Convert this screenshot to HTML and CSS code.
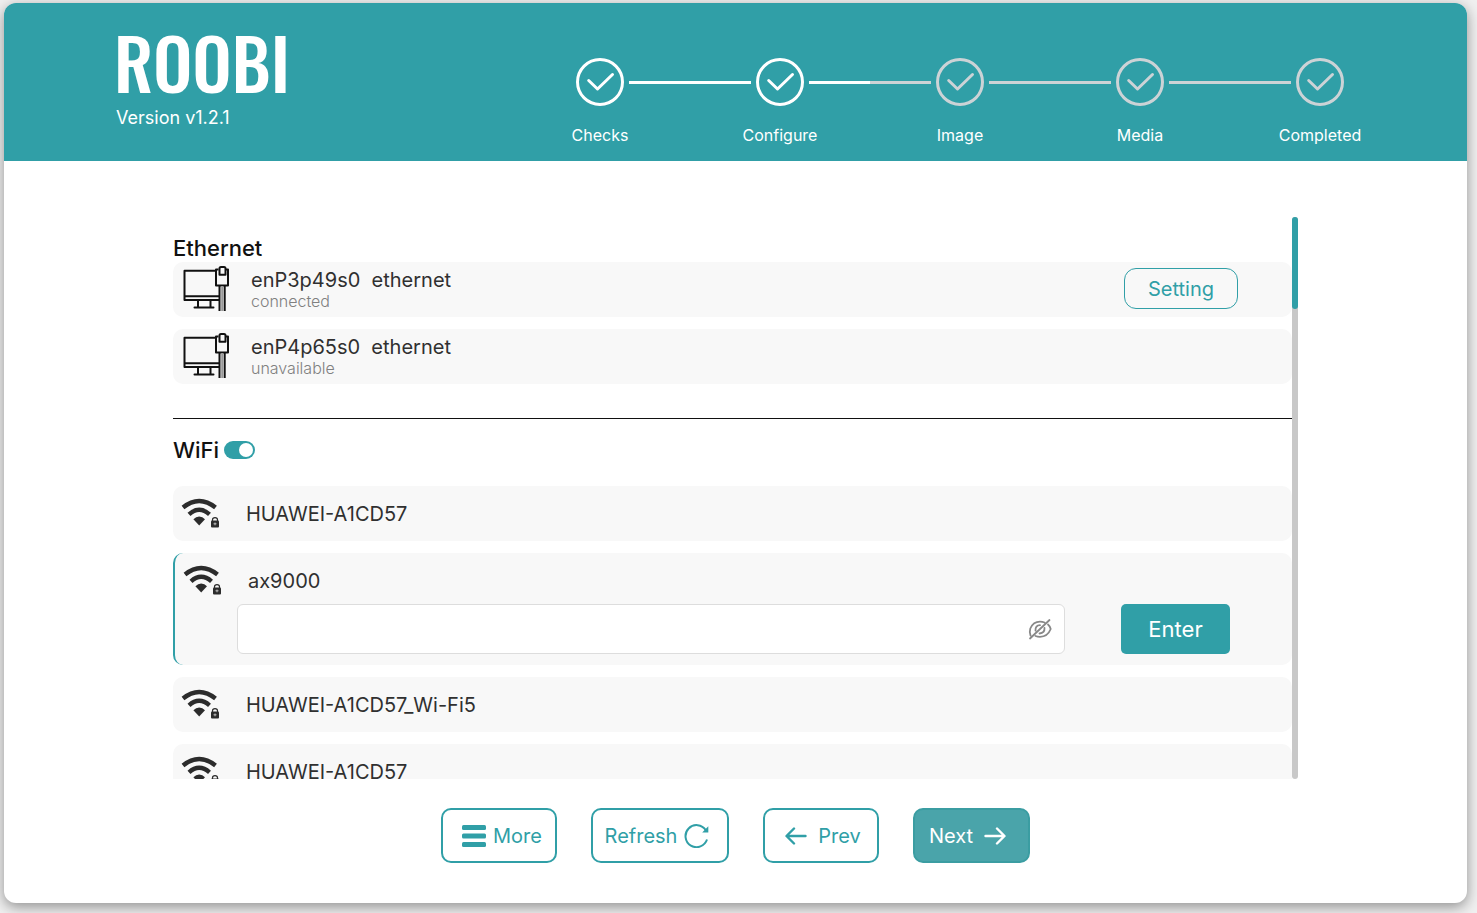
FILE: index.html
```html
<!DOCTYPE html>
<html lang="en">
<head>
<meta charset="utf-8">
<meta name="viewport" content="width=device-width, initial-scale=1">
<title>ROOBI - Configure</title>
<link rel="stylesheet" href="styles.css">
</head>
<body>
<svg class="sprite" aria-hidden="true">
  <symbol id="check" viewBox="0 0 48 48">
    <g fill="none" stroke="currentColor" stroke-width="3">
      <circle cx="24" cy="24" r="22.5"/>
      <path d="M12.7 22.5 21.500 31 36.500 16.500" stroke-linecap="round" stroke-linejoin="round"/>
    </g>
  </symbol>
  <symbol id="wired" viewBox="0 0 46 47">
    <g fill="none" stroke="currentColor" stroke-width="2" stroke-linejoin="round">
      <path d="M32.5 5.8H1.5V35H36M2 31.2H36"/>
      <path d="M15 35v7M27.500 35v7M11.500 42.500H30.500" stroke-linecap="round"/>
      <path d="M35.500 4.500H33V20.500H45V4.500H43"/>
      <path d="M36.500 9.800V3.500Q36.500 2 38 2H41Q42.500 2 42.500 3.500V9.800Z"/>
      <path d="M36.500 20.500V46M41.700 20.500V46"/>
      <path d="M39.200 21V46" stroke="#999"/>
    </g>
  </symbol>
  <symbol id="wifi-lock" viewBox="0 1.500 40 32">
    <g fill="none" stroke="currentColor" stroke-width="4.400">
      <path d="M2 11Q10 4.500 18.200 4.500T34.500 11"/>
      <path d="M8 17.800Q13 13.300 18.200 13.300T28.500 17.800"/>
    </g>
    <path d="M18.200 20Q21.500 20 24 22.800L18.200 29 12.400 22.800Q15 20 18.200 20Z" fill="currentColor"/>
    <rect x="30" y="24" width="8" height="7" rx="1" fill="currentColor"/>
    <path d="M31.500 24.500V23.300Q31.500 21.200 34 21.200T36.500 23.300V24.500" fill="none" stroke="currentColor" stroke-width="1.200"/>
    <path d="M32.500 27.300H35.500M34 26V28.800" stroke="#bbb" stroke-width="1"/>
  </symbol>
</svg>

<div class="window">
  <header class="header">
    <div class="brand">
      <h1 class="logo">ROOBI</h1>
      <p class="version">Version v1.2.1</p>
    </div>
    <ol class="steps">
      <li class="step"><div class="track"><span class="line line-none"></span><svg class="step-icon done"><use href="#check"/></svg><span class="line line-done"></span></div><span class="step-label">Checks</span></li>
      <li class="step" aria-current="step"><div class="track"><span class="line line-done"></span><svg class="step-icon done"><use href="#check"/></svg><span class="line line-done"></span></div><span class="step-label">Configure</span></li>
      <li class="step"><div class="track"><span class="line"></span><svg class="step-icon"><use href="#check"/></svg><span class="line"></span></div><span class="step-label">Image</span></li>
      <li class="step"><div class="track"><span class="line"></span><svg class="step-icon"><use href="#check"/></svg><span class="line"></span></div><span class="step-label">Media</span></li>
      <li class="step"><div class="track"><span class="line"></span><svg class="step-icon"><use href="#check"/></svg><span class="line line-none"></span></div><span class="step-label">Completed</span></li>
    </ol>
  </header>

  <main class="content">
    <div class="networks">
      <section class="group">
        <h2 class="heading">Ethernet</h2>
        <ul class="list">
          <li class="row wired">
            <svg class="wired-icon"><use href="#wired"/></svg>
            <div class="device"><span class="name">enP3p49s0&nbsp; ethernet</span><span class="state">connected</span></div>
            <button class="setting" type="button">Setting</button>
          </li>
          <li class="row wired">
            <svg class="wired-icon"><use href="#wired"/></svg>
            <div class="device"><span class="name">enP4p65s0&nbsp; ethernet</span><span class="state">unavailable</span></div>
          </li>
        </ul>
      </section>
      <hr class="divider">
      <section class="group">
        <div class="wifi-head">
          <h2 class="heading">WiFi</h2>
          <input class="switch" type="checkbox" role="switch" aria-label="WiFi" checked>
        </div>
        <ul class="list">
          <li class="row wifi"><svg class="wifi-icon"><use href="#wifi-lock"/></svg><span class="name">HUAWEI-A1CD57</span></li>
          <li class="selected">
            <div class="wifi selected-head"><svg class="wifi-icon"><use href="#wifi-lock"/></svg><span class="name">ax9000</span></div>
            <form class="join">
              <div class="field">
                <input class="password" type="password" aria-label="Password for ax9000">
                <button class="reveal" type="button" aria-label="Show password">
                  <svg class="eye" viewBox="0 0 24 22" fill="none" stroke="currentColor" stroke-width="1.800" stroke-linecap="round"><path d="M2.500 17.500Q1.200 14 2.300 10.500C4.500 5.500 8 3.600 12 3.600Q14.500 3.600 16.500 4.500M20 6.500Q22 8.200 22.700 11C20.500 16.500 16.500 18.800 12 18.800Q9.500 18.800 7.500 18M7.500 12.500Q7.200 7.300 12 7.200M16.500 10Q16.800 15 11.500 15.500M11 12 13 10M2 20.500 21.500 2"/></svg>
                </button>
              </div>
              <button class="enter" type="submit">Enter</button>
            </form>
          </li>
          <li class="row wifi"><svg class="wifi-icon"><use href="#wifi-lock"/></svg><span class="name">HUAWEI-A1CD57_Wi-Fi5</span></li>
          <li class="row wifi"><svg class="wifi-icon"><use href="#wifi-lock"/></svg><span class="name">HUAWEI-A1CD57</span></li>
        </ul>
      </section>
    </div>
    <div class="scrollbar"><div class="thumb"></div></div>
  </main>

  <footer class="actions">
    <button class="action more" type="button"><svg width="24" height="22" viewBox="0 0 24 22" fill="currentColor"><rect width="24" height="5" rx="1.500"/><rect y="8.500" width="24" height="5" rx="1.500"/><rect y="17" width="24" height="5" rx="1.500"/></svg>More</button>
    <button class="action refresh" type="button">Refresh<svg width="25" height="25" viewBox="0 0 25 25" fill="none" stroke="currentColor" stroke-width="2"><path d="M23 16.500A11 11 0 1 1 21.800 7.200"/><path d="M24.300 3.200V9.600H18.200Z" fill="currentColor" stroke="none"/></svg></button>
    <button class="action prev" type="button"><svg width="22" height="18" viewBox="0 0 22 18" fill="none" stroke="currentColor" stroke-width="2.400" stroke-linecap="round" stroke-linejoin="round"><path d="M20.500 9H2M9 1.500 1.500 9 9 16.500"/></svg>Prev</button>
    <button class="action next" type="button">Next<svg width="22" height="18" viewBox="0 0 22 18" fill="none" stroke="currentColor" stroke-width="2.400" stroke-linecap="round" stroke-linejoin="round"><path d="M1.500 9H20M13 1.500 20.500 9 13 16.500"/></svg></button>
  </footer>
</div>
</body>
</html>
```

FILE: styles.css
```css
:root {
  --teal: #309fa7;
  --muted-step: #ccd3d6;
  --row: #f8f8f8;
}

* { box-sizing: border-box; }

body {
  margin: 0;
  padding: 3px 10px 10px 4px;
  background: #f0f0f0;
  font-family: Inter, "Liberation Sans", sans-serif;
  color: #303030;
}

h1, h2, p, ol, ul { margin: 0; padding: 0; }
ol, ul { list-style: none; }
button, input { font-family: inherit; margin: 0; }
button { cursor: pointer; }
svg { flex: none; }
.sprite { display: none; }

.window {
  display: flex;
  flex-direction: column;
  height: calc(100vh - 13px);
  min-height: 500px;
  overflow: hidden;
  background: #fff;
  border-radius: 12px;
  box-shadow: 0 4px 14px rgba(0, 0, 0, 0.4);
}

.header {
  display: flex;
  justify-content: space-between;
  min-height: 158px;
  padding: 24px 57px 0 110px;
  background: var(--teal);
  color: #fff;
}

.logo {
  font: 500 70px/68px Oswald, "Roboto Condensed", "Liberation Sans Narrow", "DejaVu Sans Condensed", sans-serif;
}

.version { margin-top: 8px; padding-left: 2px; font-size: 18px; line-height: 30px; }

.steps { display: flex; padding-top: 31px; }
.step { width: 180px; text-align: center; }
.track { display: flex; align-items: center; gap: 5px; }
.line { flex: 1; height: 3px; background: var(--muted-step); }
.line-done { background: #fff; }
.line-none { background: transparent; }
.step-icon { width: 48px; height: 48px; color: var(--muted-step); }
.step-icon.done { color: #fff; }
.step-label { display: block; margin-top: 19px; font-size: 16px; line-height: 20px; }

.content {
  display: flex;
  flex: 1;
  min-height: 0;
  width: 76.9%;
  margin: 56px auto 0;
}

.networks { flex: 1; min-width: 0; padding-top: 17px; overflow: hidden; }
.heading { font-size: 22px; font-weight: 500; line-height: 28px; color: #111; }
.list { display: flex; flex-direction: column; gap: 12px; }

.row {
  display: flex;
  align-items: center;
  height: 55px;
  background: var(--row);
  border-radius: 10px;
}

.wired { gap: 22px; padding: 0 54px 2px 10px; }
.wired-icon { width: 46px; height: 47px; color: #111; }
.device { display: flex; flex-direction: column; flex: 1; }
.name { font-size: 20px; line-height: 24px; white-space: nowrap; }
.state { font-size: 16px; line-height: 18px; font-weight: 300; color: #808080; }

.setting {
  width: 114px;
  height: 41px;
  border: 1px solid var(--teal);
  border-radius: 12px;
  background: transparent;
  color: var(--teal);
  font-size: 20px;
}

.divider { height: 1px; margin: 34px 0 17px; border: 0; background: #111; }
.wifi-head { display: flex; align-items: center; gap: 5px; margin-bottom: 22px; }

.switch {
  appearance: none;
  display: flex;
  justify-content: flex-end;
  align-items: center;
  width: 31px;
  height: 18px;
  padding: 2px;
  border-radius: 9px;
  background: var(--teal);
}
.switch::before { content: ""; width: 14px; height: 14px; border-radius: 50%; background: #fff; }
.switch:not(:checked) { justify-content: flex-start; background: #bbb; }

.wifi { display: flex; align-items: center; gap: 25px; padding-left: 8px; }
.wifi-icon { width: 40px; height: 32px; color: #2c2c2c; }

.selected {
  padding: 4px 0 11px;
  background: var(--row);
  border-left: 2px solid var(--teal);
  border-radius: 10px;
}
.selected-head { height: 47px; }
.join { display: flex; gap: 56px; padding: 0 62px; }

.field {
  display: flex;
  flex: 1;
  height: 50px;
  background: #fff;
  border: 1px solid #ddd;
  border-radius: 6px;
}
.password { flex: 1; min-width: 0; padding: 0 12px; border: 0; background: transparent; font-size: 20px; outline: none; }
.reveal { display: flex; align-items: center; padding: 0 12px; border: 0; background: none; color: #888; }
.eye { width: 24px; height: 22px; }

.enter {
  width: 109px;
  height: 50px;
  border: 0;
  border-radius: 5px;
  background: var(--teal);
  color: #fff;
  font-size: 22px;
}

.scrollbar { width: 6px; background: #c8c8c8; border-radius: 3px; }
.thumb { height: 92px; background: var(--teal); border-radius: 3px; }

.actions { display: flex; justify-content: center; gap: 34px; padding: 29px 0 40px; }

.action {
  display: flex;
  align-items: center;
  justify-content: center;
  height: 55px;
  border: 2px solid var(--teal);
  border-radius: 10px;
  background: #fff;
  color: var(--teal);
  font-size: 20px;
}
.more { gap: 7px; width: 116px; padding: 0 6px 0 12px; }
.refresh { gap: 7px; width: 138px; padding: 0 12px 0 6px; }
.prev { gap: 11px; width: 116px; padding: 0 6px 0 10px; }
.next { gap: 11px; width: 117px; padding: 0 14px 0 6px; border-color: #3b9da2; background: #4aa4aa; color: #fff; }
```
